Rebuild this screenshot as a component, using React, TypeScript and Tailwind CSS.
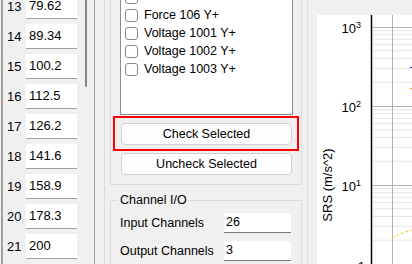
import React from 'react';

const rows = [
  ['13', '79.62'],
  ['14', '89.34'],
  ['15', '100.2'],
  ['16', '112.5'],
  ['17', '126.2'],
  ['18', '141.6'],
  ['19', '158.9'],
  ['20', '178.3'],
  ['21', '200'],
];

const channels = ['Force 106 Y+', 'Voltage 1001 Y+', 'Voltage 1002 Y+', 'Voltage 1003 Y+'];

const font = { fontFamily: '"Liberation Sans", Arial, sans-serif' };

function SrsChart() {
  // log grid: decades at y = 12, 91, 170, 249 (79px per decade)
  const majors = [12, 91, 170, 249];
  const minors: number[] = [];
  majors.slice(1).forEach((y0) => {
    for (let k = 2; k <= 9; k++) minors.push(y0 - 79 * Math.log10(k));
  });
  const labels = [
    { y: 18, exp: '3' },
    { y: 97, exp: '2' },
    { y: 176, exp: '1' },
  ];
  return (
    <svg width="95" height="249" viewBox="0 0 95 249" className="block" style={font}>
      {minors.map((y, i) => (
        <line key={i} x1="55" x2="95" y1={y} y2={y} stroke="#e6e6e6" strokeWidth="1" />
      ))}
      {majors.map((y) => (
        <line key={y} x1="55" x2="95" y1={y + 0.5} y2={y + 0.5} stroke="#b3b3b3" strokeWidth="1" />
      ))}
      <line x1="75.5" x2="75.5" y1="0" y2="249" stroke="#b3b3b3" strokeWidth="1" />
      <line x1="54.5" x2="54.5" y1="0" y2="249" stroke="#000" strokeWidth="1.5" />
      {labels.map((l) => (
        <text key={l.exp} x="44" y={l.y} fontSize="13" textAnchor="end" fill="#000">
          10
          <tspan fontSize="9" dy="-5">{l.exp}</tspan>
        </text>
      ))}
      <text x="48" y="256" fontSize="13" textAnchor="end" fill="#000">1</text>
      <text
        x="0"
        y="0"
        fontSize="13"
        fill="#000"
        textAnchor="middle"
        transform="translate(15 170) rotate(-90)"
      >
        SRS (m/s^2)
      </text>
      <line x1="93" x2="95" y1="52.5" y2="52.5" stroke="#1010c0" strokeWidth="1" />
      <line x1="93" x2="95" y1="73.5" y2="73.5" stroke="#f0a020" strokeWidth="1" />
      <path d="M75 223 Q84 218 95 215" fill="none" stroke="#f5c400" strokeWidth="1" strokeDasharray="3 2" />
    </svg>
  );
}

function Box() {
  return <span className="w-[13px] h-[13px] rounded-[3px] border border-[#8a8a8a] bg-white flex-shrink-0" />;
}

export default function App() {
  return (
    <div className="w-[412px] h-[264px] overflow-hidden bg-[#f0f0f0] flex text-black" style={font}>
      {/* left table */}
      <div className="w-[94px] flex-shrink-0 flex">
        <div className="ml-[1px] w-[84px] border-l-2 border-[#a0a0a0] flex flex-col -mt-[6px]">
          {rows.map(([n, v]) => (
            <div key={n} className="flex-shrink-0 flex items-center h-[25px] mb-[5px] text-[13px]">
              <span className="pl-[4px] w-[23px]">{n}</span>
              <span className="w-[51px] h-[25px] bg-white border-b border-[#a0a0a0] flex items-center pl-[3px]">{v}</span>
            </div>
          ))}
        </div>
        <div className="w-[3px]">
          <div className="w-[2px] h-[87px] bg-[#858585] rounded-b-sm" />
        </div>
      </div>

      {/* middle panel */}
      <div className="w-[214px] flex-shrink-0 flex border-l border-r border-l-[#a0a0a0] border-r-[#dcdcdc]">
        <div className="ml-[9px] border-l border-[#dcdcdc] pl-[5px] flex flex-col">
          <div className="flex-shrink-0 w-[192px] -mt-[30px] border border-[#dcdcdc] pt-[14px] pl-[9px] pr-[8px] pb-[9px] flex flex-col">
            <div className="flex-shrink-0 h-[130px] bg-white border border-[#8c8c8c] pl-[4px] pt-[2px] text-[12.5px]">
              <div className="h-[18px] flex items-center">
                <Box />
              </div>
              {channels.map((c) => (
                <div key={c} className="h-[18px] flex items-center gap-[6px]">
                  <Box />
                  <span>{c}</span>
                </div>
              ))}
            </div>
            <div className="relative mt-[8px] mx-[1px] flex-shrink-0">
              <button className="w-full h-[22px] rounded-[4px] border border-[#d0d0d0] bg-[#fdfdfd] text-[12.5px] flex items-center justify-center">
                Check Selected
              </button>
              <div className="absolute -left-[8px] -right-[7px] -top-[7px] -bottom-[6px] border-2 border-[#ff0000] pointer-events-none" />
            </div>
            <button className="flex-shrink-0 mt-[8px] mx-[1px] h-[22px] rounded-[4px] border border-[#d0d0d0] bg-[#fdfdfd] text-[12.5px] flex items-center justify-center">
              Uncheck Selected
            </button>
          </div>

          <fieldset className="flex-shrink-0 w-[192px] mt-[7px] border border-[#dcdcdc] pl-[7px] pr-[9px] pb-[10px]">
            <legend className="px-[2px] text-[12.5px] leading-[16px]">Channel I/O</legend>
            <div className="pl-[2px] pt-[5px] flex flex-col gap-[8px] text-[12.5px]">
              <div className="flex items-center">
                <span className="w-[104px]">Input Channels</span>
                <span className="w-[67px] h-[20px] bg-white border-b border-[#7a7a7a] pl-[2px] flex items-center">26</span>
              </div>
              <div className="flex items-center">
                <span className="w-[104px]">Output Channels</span>
                <span className="w-[67px] h-[20px] bg-white border-b border-[#7a7a7a] pl-[2px] flex items-center">3</span>
              </div>
            </div>
          </fieldset>
        </div>
      </div>

      {/* chart */}
      <div className="flex-1 pl-[9px] pt-[15px]">
        <div className="bg-white h-full">
          <SrsChart />
        </div>
      </div>
    </div>
  );
}
